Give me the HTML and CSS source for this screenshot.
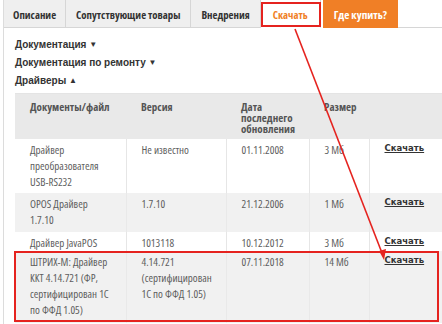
FILE: index.html
```html
<!DOCTYPE html>
<html lang="ru">
<head>
<meta charset="utf-8">
<link rel="stylesheet" href="styles.css">
</head>
<body>
<div class="page">
  <nav class="tabs">
    <a class="tab">Описание</a>
    <a class="tab">Сопутствующие товары</a>
    <a class="tab">Внедрения</a>
    <a class="tab active marked">Скачать</a>
    <a class="tab buy">Где купить?</a>
    <span class="tabs-rest"></span>
  </nav>
  <div class="content">
    <div class="toggle">Документация <span class="tri">▼</span></div>
    <div class="toggle">Документация по ремонту <span class="tri">▼</span></div>
    <div class="toggle">Драйверы <span class="tri up">▲</span></div>
    <table class="files">
      <colgroup>
        <col class="c1"><col class="c2"><col class="c3"><col class="c4"><col class="c5">
      </colgroup>
      <thead>
        <tr>
          <th>Документы/файл</th>
          <th>Версия</th>
          <th>Дата последнего обновления</th>
          <th>Размер</th>
          <th></th>
        </tr>
      </thead>
      <tbody>
        <tr class="r1">
          <td>Драйвер преобразователя USB-RS232</td>
          <td>Не известно</td>
          <td>01.11.2008</td>
          <td>3 Мб</td>
          <td class="dl"><a>Скачать</a></td>
        </tr>
        <tr class="r2 alt">
          <td>OPOS Драйвер<br>1.7.10</td>
          <td>1.7.10</td>
          <td>21.12.2006</td>
          <td>1 Мб</td>
          <td class="dl"><a>Скачать</a></td>
        </tr>
        <tr class="r3">
          <td>Драйвер JavaPOS</td>
          <td>1013118</td>
          <td>10.12.2012</td>
          <td>3 Мб</td>
          <td class="dl"><a>Скачать</a></td>
        </tr>
        <tr class="r4 alt">
          <td>ШТРИХ-М: Драйвер ККТ 4.14.721 (ФР, сертифицирован 1С по ФФД 1.05)</td>
          <td>4.14.721 (сертифицирован 1С по ФФД 1.05)</td>
          <td>07.11.2018</td>
          <td>14 Мб</td>
          <td class="dl"><a>Скачать</a></td>
        </tr>
      </tbody>
    </table>
  </div>
  <div class="row-mark"></div>
  <svg class="arrow" width="442" height="324" viewBox="0 0 442 324">
    <line x1="295" y1="29" x2="382" y2="253" stroke="#e5231f" stroke-width="1.6"/>
    <polygon points="384,260 379,251 386,249" fill="#e5231f"/>
  </svg>
</div>
</body>
</html>
```
FILE: styles.css
```css
html, body {
  margin: 0;
  padding: 0;
  background: #fff;
}
body {
  font-family: "Open Sans", "Liberation Sans", sans-serif;
  font-stretch: 75%;
  color: #666;
  overflow: hidden;
}
.page {
  position: relative;
  width: 442px;
  height: 324px;
  box-sizing: border-box;
  margin-left: 3px;
  border-left: 1px solid #dcdcdc;
}
.tabs {
  display: flex;
  height: 28px;
  align-items: stretch;
}
.tab {
  display: flex;
  align-items: center;
  justify-content: center;
  padding: 1px 10px 0;
  background: #efefef;
  border-right: 1px solid #d6d6d6;
  border-bottom: 1px solid #d6d6d6;
  font-size: 10.8px;
  font-weight: 700;
  color: #333;
  white-space: nowrap;
}
.tab:first-child {
  padding: 1px 9px 0;
}
.tab.active {
  background: #fff;
  color: #f07f26;
  border-bottom-color: #fff;
  padding: 1px 12px 0;
}
.tab.marked {
  position: relative;
}
.tab.marked::after {
  content: "";
  position: absolute;
  left: 0;
  top: 2px;
  right: -1px;
  bottom: 0;
  border: 2px solid #e5231f;
}
.tab.buy {
  background: #f07f26;
  color: #fff;
  border-right: none;
  border-bottom-color: #f07f26;
  margin-left: 2px;
  padding: 1px 11px 0;
  font-size: 11.2px;
}
.tabs-rest {
  flex: 1;
  border-bottom: 1px solid #d6d6d6;
}
.content {
  padding: 8px 0 0 11px;
}
.toggle {
  font-family: "Liberation Sans", Arial, sans-serif;
  font-stretch: normal;
  font-weight: 700;
  font-size: 10px;
  color: #333;
  line-height: 18px;
}
.tri {
  font-size: 8px;
  vertical-align: 1px;
}
.files {
  margin-top: 3px;
  border-collapse: collapse;
  table-layout: fixed;
  width: 427px;
  border-top: 1px solid #e4e4e4;
}
.c1 { width: 111px; }
.c2 { width: 100px; }
.c3 { width: 83px; }
.c4 { width: 60px; }
.c5 { width: 73px; }
.files th {
  background: #e9e9e9;
  height: 45px;
  box-sizing: border-box;
  vertical-align: top;
  text-align: left;
  padding: 7px 8px 0 15px;
  font-size: 11px;
  line-height: 11px;
  font-weight: 700;
  color: #555;
}
.files td {
  vertical-align: top;
  padding: 3px 12px 0 15px;
  font-size: 11px;
  line-height: 16px;
  color: #5e5e5e;
  border-left: 1px solid #e6e6e6;
}
.files td:first-child {
  border-left: none;
}
.files td:nth-child(2) {
  padding-right: 8px;
}
.files tr.alt td {
  background: #f1f1f1;
  border-left-color: #e9e9e9;
}
.r1 { height: 54px; }
.r2 { height: 39px; }
.r3 { height: 19px; }
.r4 { height: 72px; }
.files td.dl {
  padding-top: 0;
  padding-right: 4px;
}
.dl a {
  font-family: "DejaVu Sans", Verdana, sans-serif;
  font-stretch: normal;
  font-size: 8.5px;
  font-weight: 700;
  color: #333;
  text-decoration: underline;
}
.row-mark {
  position: absolute;
  left: 10px;
  top: 251px;
  width: 425px;
  height: 71px;
  box-sizing: border-box;
  border: 2px solid #e5231f;
}
.arrow {
  position: absolute;
  left: -4px;
  top: 0;
  pointer-events: none;
}
```
